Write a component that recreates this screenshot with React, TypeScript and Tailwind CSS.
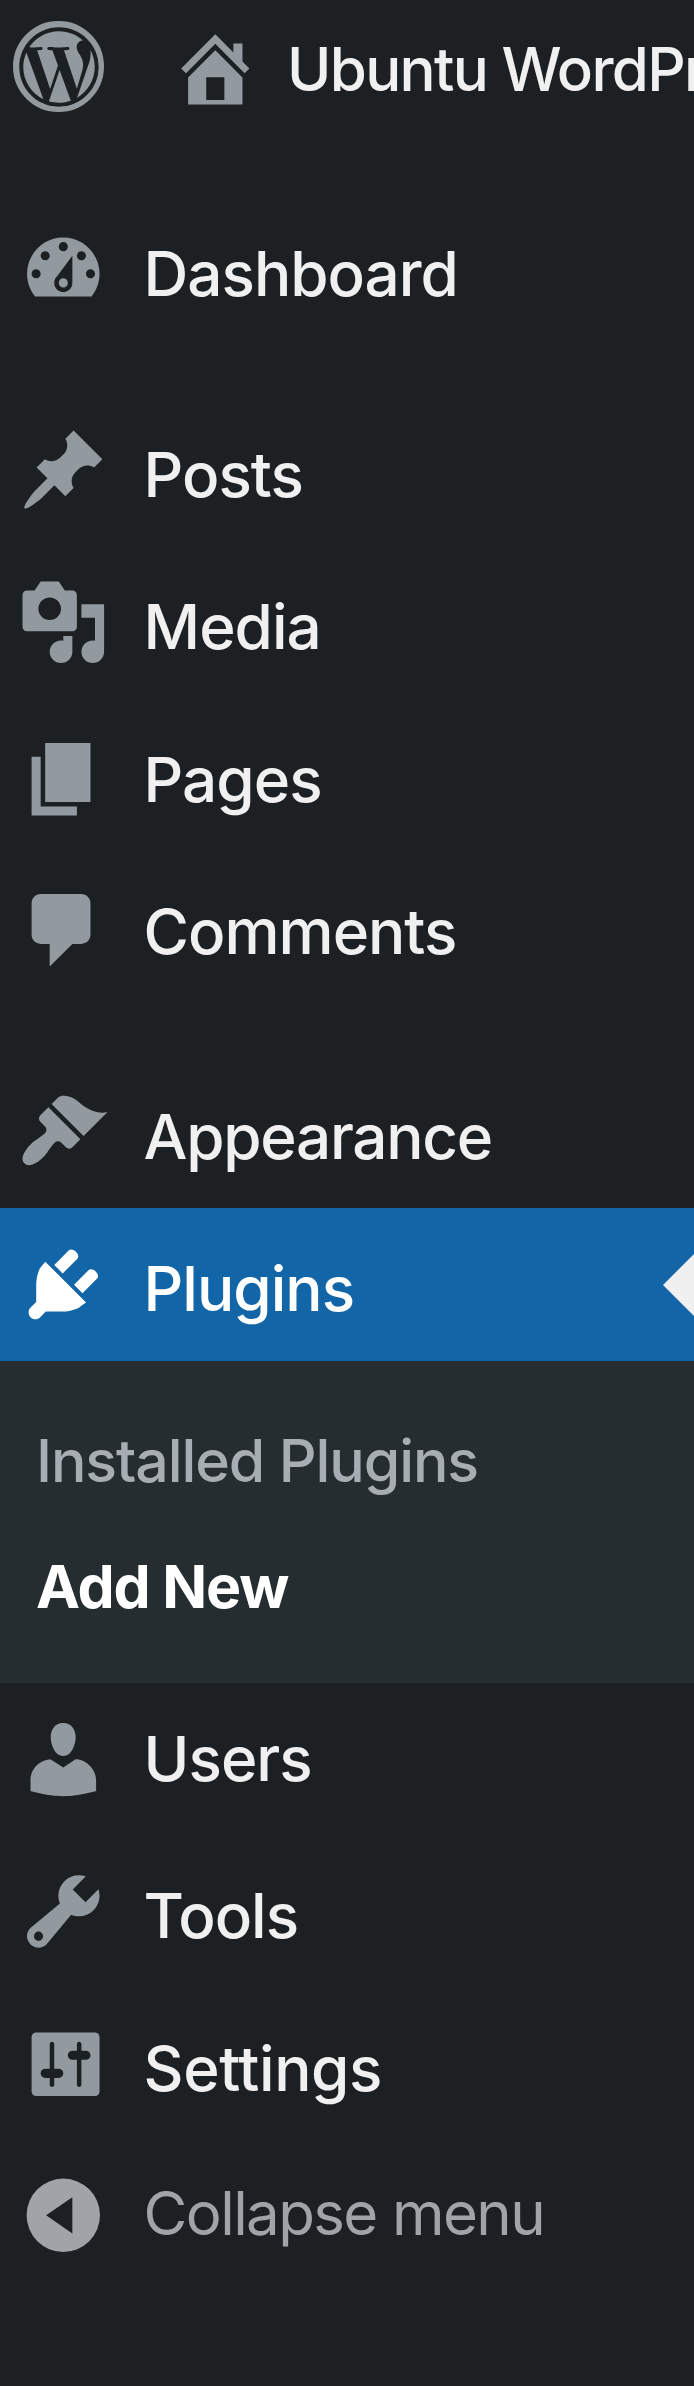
import { FaWordpress } from 'react-icons/fa';

const icons: Record<string, string> = {
  home: 'M16 8.5l1.53 1.53-1.06 1.06L10 4.6l-6.47 6.49-1.06-1.06L10 2.5l4 4v-2h2v4zm-6-2.46l6 5.99V18H4v-5.97zM12 17v-5H8v5h4z',
  dashboard:
    'M3.76 16h12.48c1.1-1.37 1.76-3.11 1.76-5 0-4.42-3.58-8-8-8s-8 3.58-8 8c0 1.89.66 3.63 1.76 5zM10 4c.55 0 1 .45 1 1s-.45 1-1 1-1-.45-1-1 .45-1 1-1zM6 6c.55 0 1 .45 1 1s-.45 1-1 1-1-.45-1-1 .45-1 1-1zm8 0c.55 0 1 .45 1 1s-.45 1-1 1-1-.45-1-1 .45-1 1-1zm-5.37 5.55L12 7v6c0 1.1-.9 2-2 2s-2-.9-2-2c0-.57.24-1.08.63-1.45zM4 10c.55 0 1 .45 1 1s-.45 1-1 1-1-.45-1-1 .45-1 1-1zm12 0c.55 0 1 .45 1 1s-.45 1-1 1-1-.45-1-1 .45-1 1-1zm-5 3c0-.55-.45-1-1-1s-1 .45-1 1 .45 1 1 1 1-.45 1-1z',
  posts:
    'M10.44 3.02l1.82-1.82 6.36 6.35-1.83 1.82c-1.05-.68-2.48-.57-3.41.36l-.75.75c-.92.93-1.04 2.35-.35 3.41l-1.83 1.82-2.41-2.41-2.8 2.79c-.42.42-3.38 2.71-3.8 2.29s1.86-3.39 2.28-3.81l2.79-2.79L4.1 9.36l1.83-1.82c1.05.69 2.48.57 3.4-.36l.75-.75c.93-.92 1.05-2.35.36-3.41z',
  media:
    'M13 11V4c0-.55-.45-1-1-1h-1.67L9 1H5L3.67 3H2c-.55 0-1 .45-1 1v7c0 .55.45 1 1 1h10c.55 0 1-.45 1-1zM7 4.5c1.38 0 2.5 1.12 2.5 2.5S8.38 9.5 7 9.5 4.5 8.38 4.5 7 5.62 4.5 7 4.5zM14 6h5v10.5c0 1.38-1.12 2.5-2.5 2.5S14 17.88 14 16.5s1.12-2.5 2.5-2.5c.17 0 .34.02.5.05V9h-3V6zm-4 8.05V13h2v3.5c0 1.38-1.12 2.5-2.5 2.5S7 17.88 7 16.5 8.12 14 9.5 14c.17 0 .34.02.5.05z',
  pages: 'M6 15V2h10v13H6zm-1 1h8v2H3V5h2v11z',
  comments: 'M5 2h9c1.1 0 2 .9 2 2v7c0 1.1-.9 2-2 2h-2l-5 5v-5H5c-1.1 0-2-.9-2-2V4c0-1.1.9-2 2-2z',
  appearance:
    'M14.48 11.06L7.41 3.99l1.5-1.5c.5-.56 2.3-.47 3.51.32 1.21.8 1.43 1.28 2.91 2.1 1.18.64 2.45 1.26 4.45.85zm-.71.71L6.7 4.7 4.93 6.47c-.39.39-.39 1.02 0 1.41l1.06 1.06c.39.39.39 1.03 0 1.42-.6.6-1.43 1.11-2.21 1.69-.35.26-.7.53-1.01.84C1.43 14.23.4 16.08 1.4 17.07c.99 1 2.84-.03 4.18-1.36.31-.31.58-.66.85-1.02.57-.78 1.08-1.61 1.69-2.21.39-.39 1.02-.39 1.41 0l1.06 1.06c.39.39 1.02.39 1.41 0z',
  plugins:
    'M13.11 4.36L9.87 7.6 8 5.73l3.24-3.24c.35-.34 1.05-.2 1.56.32.52.51.66 1.21.31 1.55zm-8 1.77l.91-1.12 9.01 9.01-1.19.84c-.71.71-2.63 1.16-3.82 1.16H6.14L4.9 17.26c-.59.59-1.54.59-2.12 0-.59-.58-.59-1.53 0-2.12l1.24-1.24v-3.88c0-1.13.4-3.19 1.09-3.89zm7.26 3.97l3.24-3.24c.34-.35 1.04-.21 1.55.31.52.51.66 1.21.31 1.55l-3.24 3.25z',
  users:
    'M10 9.25c-2.27 0-2.73-3.44-2.73-3.44C7 4.02 7.82 2 9.97 2c2.16 0 2.98 2.02 2.71 3.81 0 0-.41 3.44-2.68 3.44zm0 2.57L12.72 10c2.39 0 4.52 2.33 4.52 4.53v2.49s-3.65 1.13-7.24 1.13c-3.65 0-7.24-1.13-7.24-1.13v-2.49c0-2.25 1.94-4.48 4.47-4.48z',
  tools:
    'M16.68 9.77c-1.34 1.34-3.3 1.67-4.95.99l-5.41 6.52c-.99.99-2.59.99-3.58 0s-.99-2.59 0-3.57l6.52-5.42c-.68-1.65-.35-3.61.99-4.95 1.28-1.28 3.12-1.62 4.72-1.06l-2.89 2.89 2.82 2.82 2.86-2.87c.53 1.58.18 3.39-1.08 4.65zM3.81 16.21c.4.39 1.04.39 1.43 0 .4-.4.4-1.04 0-1.43-.39-.4-1.03-.4-1.43 0-.39.39-.39 1.03 0 1.43z',
  settings:
    'M18 16V4c0-.55-.45-1-1-1H4c-.55 0-1 .45-1 1v12c0 .55.45 1 1 1h13c.55 0 1-.45 1-1zM8 11h1c.55 0 1 .45 1 1s-.45 1-1 1H8v1.5c0 .28-.22.5-.5.5s-.5-.22-.5-.5V13H6c-.55 0-1-.45-1-1s.45-1 1-1h1V5.5c0-.28.22-.5.5-.5s.5.22.5.5V11zm5-2h-1c-.55 0-1-.45-1-1s.45-1 1-1h1V5.5c0-.28.22-.5.5-.5s.5.22.5.5V7h1c.55 0 1 .45 1 1s-.45 1-1 1h-1v5.5c0 .28-.22.5-.5.5s-.5-.22-.5-.5V9z',
  collapse: 'M10 1.9a8.1 8.1 0 1 0 0 16.2a8.1 8.1 0 1 0 0-16.2zM12 6v8L6.2 10z',
};

function Icon({ name, className = '' }: { name: string; className?: string }) {
  return (
    <svg viewBox="0 0 20 20" fill="currentColor" fillRule="evenodd" className={`size-[90.6px] shrink-0 ${className}`}>
      <path d={icons[name]} />
    </svg>
  );
}

type ItemProps = {
  name: string;
  label: string;
  row?: string;
  icon?: string;
  text?: string;
};

function Item({
  name,
  label,
  row = 'h-[152.5px] text-[#f0f0f1]',
  icon = 'mt-[31px] text-[#939a9f]',
  text = 'pt-[5px] text-[62px] tracking-[-1px]',
}: ItemProps) {
  return (
    <li className={`flex items-start pl-[17.5px] ${row}`}>
      <Icon name={name} className={icon} />
      <span className={`ml-[35.5px] leading-[152px] whitespace-nowrap ${text}`}>{label}</span>
    </li>
  );
}

export default function App() {
  return (
    <div className="h-[2386px] w-[694px] overflow-hidden bg-[#1d2023] font-['Inter',sans-serif] font-medium">
      <header className="flex h-[145px] items-start overflow-hidden text-[#939a9f]">
        <div className="mt-[21px] ml-[13px] flex size-[91px] shrink-0 items-center justify-center rounded-full border-[5px] border-current">
          <FaWordpress className="size-[86px] shrink-0" />
        </div>
        <Icon name="home" className="mt-[23px] ml-[66px]" />
        <span className="ml-[26.5px] pt-[3px] text-[60px] leading-[132px] tracking-[-1.7px] whitespace-nowrap text-[#f0f0f1]">
          Ubuntu WordPress
        </span>
      </header>

      <nav>
        <ul className="pt-[47.5px]">
          <Item name="dashboard" label="Dashboard" />
        </ul>
        <ul className="pt-[48.5px]">
          <Item name="posts" label="Posts" />
          <Item name="media" label="Media" />
          <Item name="pages" label="Pages" icon="mt-[35px] text-[#939a9f]" />
          <Item name="comments" label="Comments" icon="mt-[34px] text-[#939a9f]" />
        </ul>
        <ul className="pt-[51.5px]">
          <Item name="appearance" label="Appearance" text="pt-[6px] text-[62px] tracking-[-1.3px]" />
          <Item
            name="plugins"
            label="Plugins"
            row="relative h-[153.5px] bg-[#1265a6] text-white after:absolute after:top-[46px] after:right-0 after:border-y-[31px] after:border-r-[31px] after:border-y-transparent after:border-r-[#f0f0f1]"
            icon="mt-[31px] text-white"
          />
        </ul>
        <ul className="h-[321.5px] bg-[#262d30] pt-[37px] pl-[36px] text-[59px] leading-[126px] whitespace-nowrap">
          <li className="tracking-[-1.1px] text-[#a7adb2]">Installed Plugins</li>
          <li className="font-bold tracking-[-1.2px] text-white">Add New</li>
        </ul>
        <ul>
          <Item name="users" label="Users" text="text-[62px] tracking-[-1px]" />
          <Item name="tools" label="Tools" />
          <Item name="settings" label="Settings" text="pt-[5px] text-[62px] tracking-[-0.4px]" />
          <Item
            name="collapse"
            label="Collapse menu"
            row="h-[152.5px] text-[#a0a3a7]"
            icon="mt-[30px]"
            text="-mt-[3px] text-[60px] font-normal tracking-[-1.6px]"
          />
        </ul>
      </nav>
    </div>
  );
}
